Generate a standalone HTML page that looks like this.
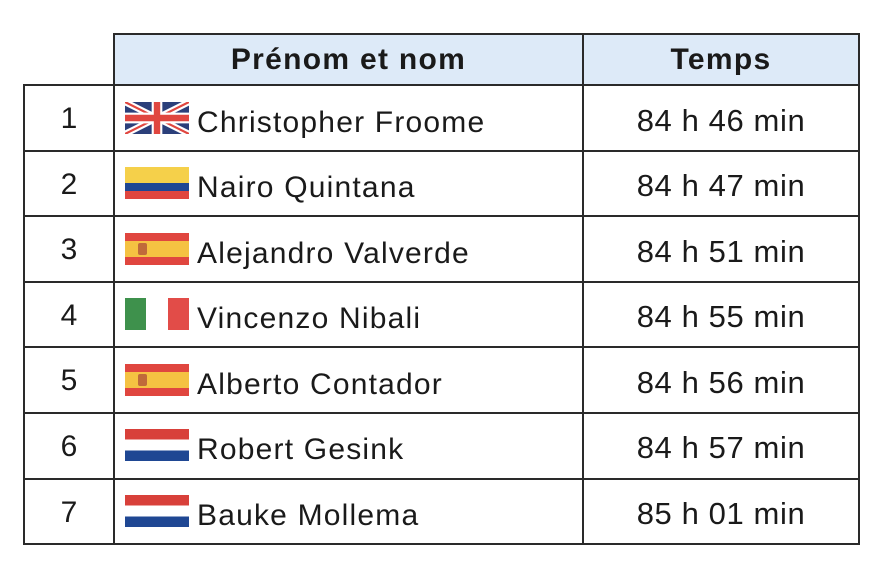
<!DOCTYPE html>
<html><head><meta charset="utf-8"><style>
body{margin:0;width:884px;height:570px;background:#fff;position:relative;font-family:"Liberation Sans",sans-serif;color:#1a1a1a;overflow:hidden}
.l{position:absolute;background:#2a2a2a}
.t{position:absolute;font-size:30px;line-height:34px;white-space:nowrap}
.n{letter-spacing:1.2px}
.m{font-size:31px;letter-spacing:0.6px}
.c{text-align:center}
.f{position:absolute;left:125px;width:64px;height:32px}
</style></head><body>
<div style="position:absolute;left:115px;top:35px;width:744px;height:50px;background:#ddeaf8"></div>
<div class="l" style="left:114px;top:33px;width:746px;height:2px"></div>
<div class="l" style="left:23px;top:84px;width:837px;height:2px"></div>
<div class="l" style="left:23px;top:150px;width:837px;height:2px"></div>
<div class="l" style="left:23px;top:215px;width:837px;height:2px"></div>
<div class="l" style="left:23px;top:281px;width:837px;height:2px"></div>
<div class="l" style="left:23px;top:346px;width:837px;height:2px"></div>
<div class="l" style="left:23px;top:412px;width:837px;height:2px"></div>
<div class="l" style="left:23px;top:478px;width:837px;height:2px"></div>
<div class="l" style="left:23px;top:543px;width:837px;height:2px"></div>
<div class="l" style="left:23px;top:84px;width:2px;height:461px"></div>
<div class="l" style="left:113px;top:33px;width:2px;height:512px"></div>
<div class="l" style="left:582px;top:33px;width:2px;height:512px"></div>
<div class="l" style="left:858px;top:33px;width:2px;height:512px"></div>

<div class="t c" style="left:115px;width:467px;top:43px;font-weight:bold;letter-spacing:1.3px">Prénom et nom</div>
<div class="t c" style="left:584px;width:274px;top:43px;font-weight:bold;letter-spacing:1.3px">Temps</div>

<div class="t c" style="left:25px;width:88px;top:102px">1</div>
<div class="t c" style="left:25px;width:88px;top:168px">2</div>
<div class="t c" style="left:25px;width:88px;top:233px">3</div>
<div class="t c" style="left:25px;width:88px;top:299px">4</div>
<div class="t c" style="left:25px;width:88px;top:364px">5</div>
<div class="t c" style="left:25px;width:88px;top:430px">6</div>
<div class="t c" style="left:25px;width:88px;top:496px">7</div>

<div class="t n" style="left:197px;top:106px">Christopher Froome</div>
<div class="t n" style="left:197px;top:171px">Nairo Quintana</div>
<div class="t n" style="left:197px;top:237px">Alejandro Valverde</div>
<div class="t n" style="left:197px;top:302px">Vincenzo Nibali</div>
<div class="t n" style="left:197px;top:368px">Alberto Contador</div>
<div class="t n" style="left:197px;top:433px">Robert Gesink</div>
<div class="t n" style="left:197px;top:499px">Bauke Mollema</div>

<div class="t c m" style="left:584px;width:274px;top:104px">84 h 46 min</div>
<div class="t c m" style="left:584px;width:274px;top:169px">84 h 47 min</div>
<div class="t c m" style="left:584px;width:274px;top:235px">84 h 51 min</div>
<div class="t c m" style="left:584px;width:274px;top:300px">84 h 55 min</div>
<div class="t c m" style="left:584px;width:274px;top:366px">84 h 56 min</div>
<div class="t c m" style="left:584px;width:274px;top:431px">84 h 57 min</div>
<div class="t c m" style="left:584px;width:274px;top:497px">85 h 01 min</div>

<svg class="f" style="top:102px" viewBox="0 0 60 30" preserveAspectRatio="none">
<rect width="60" height="30" fill="#2b3f7a"/>
<path d="M0,0 L60,30 M60,0 L0,30" stroke="#fff" stroke-width="6"/>
<path d="M0,0 L60,30 M60,0 L0,30" stroke="#e0463f" stroke-width="2"/>
<path d="M30,0 V30 M0,15 H60" stroke="#fff" stroke-width="10"/>
<path d="M30,0 V30 M0,15 H60" stroke="#e0463f" stroke-width="6"/>
</svg>
<div class="f" style="top:167px;background:linear-gradient(#f5d04a 0 50%,#1f4793 50% 75%,#e0463f 75%)"></div>
<div class="f" style="top:233px;background:linear-gradient(#e0463f 0 25%,#f5c242 25% 75%,#e0463f 75%)"><div style="position:absolute;left:13px;top:10px;width:9px;height:12px;background:#c06a3a;border-radius:2px"></div></div>
<div class="f" style="top:298px;background:linear-gradient(90deg,#3e914c 0 33%,#fff 33% 67%,#e24c48 67%)"></div>
<div class="f" style="top:364px;background:linear-gradient(#e0463f 0 25%,#f5c242 25% 75%,#e0463f 75%)"><div style="position:absolute;left:13px;top:10px;width:9px;height:12px;background:#c06a3a;border-radius:2px"></div></div>
<div class="f" style="top:429px;background:linear-gradient(#d8403a 0 33%,#fff 33% 67%,#1f4793 67%)"></div>
<div class="f" style="top:495px;background:linear-gradient(#d8403a 0 33%,#fff 33% 67%,#1f4793 67%)"></div>
</body></html>
